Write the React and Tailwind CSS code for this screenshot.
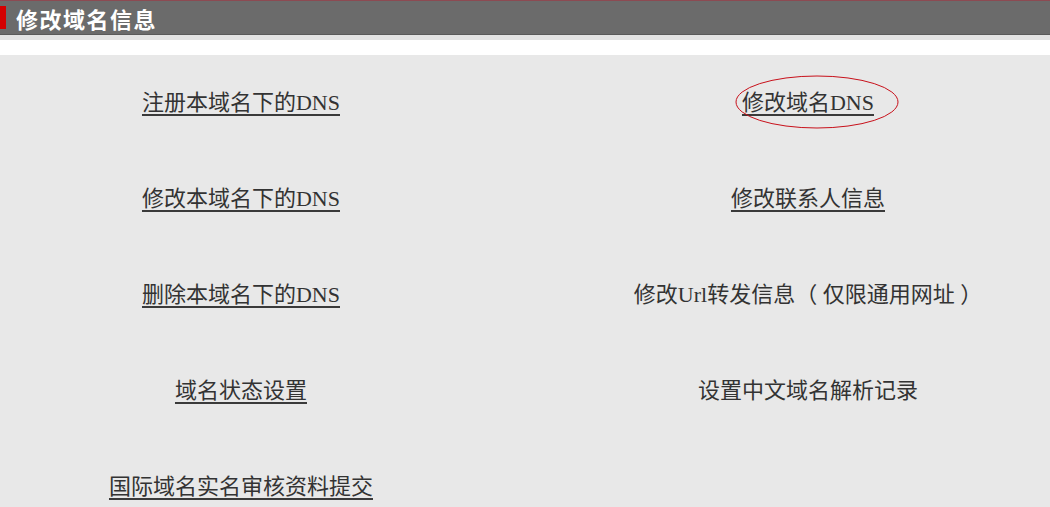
import React from 'react';

const rows = [
  { left: '注册本域名下的DNS', right: '修改域名DNS', rightLink: true, circled: true },
  { left: '修改本域名下的DNS', right: '修改联系人信息', rightLink: true },
  { left: '删除本域名下的DNS', right: '修改Url转发信息（ 仅限通用网址 ）', rightLink: false },
  { left: '域名状态设置', right: '设置中文域名解析记录', rightLink: false },
  { left: '国际域名实名审核资料提交', right: null },
];

const App = () => {
  return (
    <div
      className="w-[1050px] h-[507px] overflow-hidden bg-[#e8e8e8] text-[#333333]"
      style={{ fontFamily: '"Liberation Serif", "Noto Sans CJK SC", serif' }}
    >
      {/* Title bar */}
      <div className="h-[35px] bg-[#6b6b6b] border-t border-[#8c4a52] border-b border-b-[#5a5a5a] flex items-center">
        <div className="w-[6px] h-[23px] bg-[#d40000]" />
        <span
          className="ml-[10px] text-[22px] font-bold text-white tracking-[1.5px] leading-none"
          style={{ fontFamily: '"Noto Sans CJK SC", sans-serif' }}
        >
          修改域名信息
        </span>
      </div>
      <div className="h-[5px] bg-[#e3e3e3]" />
      <div className="h-[15px] bg-white" />

      {/* Links */}
      <div>
        {rows.map((row, i) => (
          <div key={i} className="h-[96px] grid grid-cols-[482px_1fr] items-center text-[22px] leading-none">
            <div className="flex justify-center">
              <a href="#" className="underline decoration-2 underline-offset-[4px] decoration-[#3a3a3a] text-[#333333]">
                {row.left}
              </a>
            </div>
            <div className="flex justify-center pl-[84px]">
              {row.right &&
                (row.rightLink ? (
                  <span className="relative">
                    <a href="#" className="underline decoration-2 underline-offset-[4px] decoration-[#3a3a3a] text-[#333333]">
                      {row.right}
                    </a>
                    {row.circled && (
                      <svg
                        className="absolute left-[-7px] top-[-17px]"
                        width="164"
                        height="54"
                        viewBox="0 0 164 54"
                        fill="none"
                      >
                        <ellipse cx="82" cy="27" rx="81" ry="26" stroke="#c8101a" strokeWidth="1" />
                      </svg>
                    )}
                  </span>
                ) : (
                  <span>{row.right}</span>
                ))}
            </div>
          </div>
        ))}
      </div>
    </div>
  );
};

export default App;
